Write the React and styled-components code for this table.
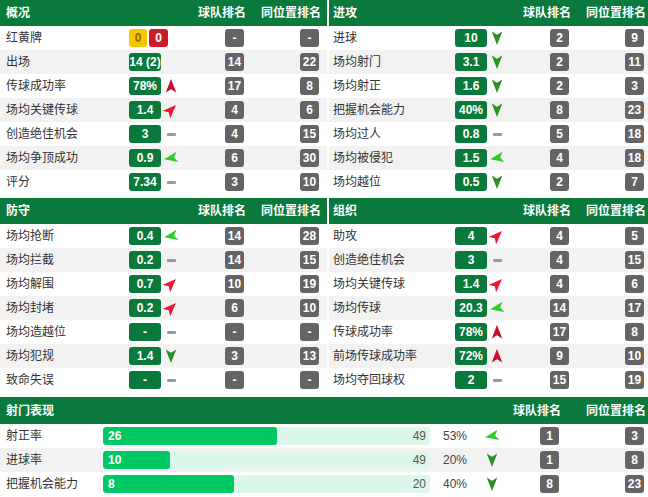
import React from 'react';
import styled, { createGlobalStyle } from 'styled-components';

const Global = createGlobalStyle`
  html, body { margin: 0; padding: 0; background: #fff; }
  body {
    font-family: "Liberation Sans", "Noto Sans CJK SC", sans-serif;
    font-size: 12px;
    color: #333;
    overflow: hidden;
  }
`;

const GREEN = '#0a7a3c';

const Page = styled.div`
  width: 648px;
  display: flex;
  flex-direction: column;
`;

const TwoCol = styled.div`
  display: grid;
  grid-template-columns: 327px 319px;
  column-gap: 2px;
  margin-bottom: ${(p) => p.$mb}px;
`;

const Panel = styled.section`
  display: flex;
  flex-direction: column;
`;

const HeadRow = styled.div`
  display: grid;
  grid-template-columns: ${(p) => p.$label}px 70px 1fr 75px;
  align-items: center;
  height: 26px;
  padding: 0 ${(p) => p.$pr}px 0 ${(p) => p.$pl}px;
  background: ${GREEN};
  color: #fff;
  font-weight: bold;
  line-height: 14px;
`;

const HeadTitle = styled.div`
  grid-column: 1 / 3;
`;

const HeadRight = styled.div`
  display: flex;
  justify-content: flex-end;
  white-space: nowrap;
  margin-right: -2px;
  min-width: 0;
`;

const Row = styled.div`
  display: grid;
  grid-template-columns: ${(p) => p.$label}px 70px 1fr 75px;
  align-items: center;
  height: 24px;
  padding: 0 ${(p) => p.$pr}px 0 ${(p) => p.$pl}px;
  background: ${(p) => (p.$striped ? '#f2f2f2' : '#fff')};
  line-height: 14px;
`;

const Label = styled.div`
  color: #333;
  white-space: nowrap;
`;

const ValueCell = styled.div`
  display: flex;
  align-items: center;
`;

const RankCell = styled.div`
  display: flex;
  justify-content: flex-end;
`;

const Badge = styled.span`
  display: inline-flex;
  align-items: center;
  justify-content: center;
  height: 18px;
  border-radius: 3px;
  font-weight: bold;
  font-size: 12px;
  line-height: 18px;
  white-space: nowrap;
  color: ${(p) => p.$fg || '#fff'};
  background: ${(p) => p.$bg};
  min-width: ${(p) => p.$w}px;
  padding: 0 ${(p) => p.$px || 0}px;
  box-sizing: border-box;
  margin-right: ${(p) => p.$mr || 0}px;
`;

const Dash = styled.span`
  display: inline-block;
  width: 9px;
  height: 3px;
  background: #9a9a9a;
  border-radius: 1px;
  margin-left: 6px;
`;

const ArrowSvg = styled.svg`
  display: block;
  width: 16px;
  height: 16px;
  margin-left: 2px;
`;

const ARROWS = {
  up: { rot: 0, color: '#c4102e' },
  ur: { rot: 45, color: '#e8172f' },
  gl: { rot: 260, color: '#2fcb2a' },
  down: { rot: 180, color: '#2e8f2a' },
};

function Trend({ t }) {
  if (!t) return null;
  if (t === 'dash') return <Dash />;
  const a = ARROWS[t];
  return (
    <ArrowSvg viewBox="-8 -8 16 16">
      <path d="M0 -7 L5.3 6.5 L0 3.2 L-5.3 6.5 Z" fill={a.color} transform={`rotate(${a.rot})`} />
    </ArrowSvg>
  );
}

const Rank = ({ v }) => (
  <Badge $bg="#646464" $w={19} $px={2}>
    {v}
  </Badge>
);

function StatPanel({ title, rows, label, pl, pr }) {
  return (
    <Panel>
      <HeadRow $label={label} $pl={pl} $pr={pr}>
        <HeadTitle>{title}</HeadTitle>
        <HeadRight>球队排名</HeadRight>
        <HeadRight>同位置排名</HeadRight>
      </HeadRow>
      {rows.map((r, i) => (
        <Row key={r[0]} $label={label} $pl={pl} $pr={pr} $striped={i % 2 === 1}>
          <Label>{r[0]}</Label>
          <ValueCell>
            {r[1] === 'cards' ? (
              <>
                <Badge $bg="#f7c600" $fg="#8c6c00" $w={18} $mr={2}>0</Badge>
                <Badge $bg="#cc1c2c" $w={19}>0</Badge>
              </>
            ) : (
              <Badge $bg={GREEN} $w={32}>{r[1]}</Badge>
            )}
            <Trend t={r[2]} />
          </ValueCell>
          <RankCell>
            <Rank v={r[3]} />
          </RankCell>
          <RankCell>
            <Rank v={r[4]} />
          </RankCell>
        </Row>
      ))}
    </Panel>
  );
}

const overview = [
  ['红黄牌', 'cards', null, '-', '-'],
  ['出场', '14 (2)', null, '14', '22'],
  ['传球成功率', '78%', 'up', '17', '8'],
  ['场均关键传球', '1.4', 'ur', '4', '6'],
  ['创造绝佳机会', '3', 'dash', '4', '15'],
  ['场均争顶成功', '0.9', 'gl', '6', '30'],
  ['评分', '7.34', 'dash', '3', '10'],
];

const attack = [
  ['进球', '10', 'down', '2', '9'],
  ['场均射门', '3.1', 'down', '2', '11'],
  ['场均射正', '1.6', 'down', '2', '3'],
  ['把握机会能力', '40%', 'down', '8', '23'],
  ['场均过人', '0.8', 'dash', '5', '18'],
  ['场均被侵犯', '1.5', 'gl', '4', '18'],
  ['场均越位', '0.5', 'down', '2', '7'],
];

const defense = [
  ['场均抢断', '0.4', 'gl', '14', '28'],
  ['场均拦截', '0.2', 'dash', '14', '15'],
  ['场均解围', '0.7', 'ur', '10', '19'],
  ['场均封堵', '0.2', 'ur', '6', '10'],
  ['场均造越位', '-', 'dash', '-', '-'],
  ['场均犯规', '1.4', 'down', '3', '13'],
  ['致命失误', '-', 'dash', '-', '-'],
];

const organize = [
  ['助攻', '4', 'ur', '4', '5'],
  ['创造绝佳机会', '3', 'dash', '4', '15'],
  ['场均关键传球', '1.4', 'ur', '4', '6'],
  ['场均传球', '20.3', 'gl', '14', '17'],
  ['传球成功率', '78%', 'up', '17', '8'],
  ['前场传球成功率', '72%', 'up', '9', '10'],
  ['场均夺回球权', '2', 'dash', '15', '19'],
];

const shooting = [
  ['射正率', 26, 49, '53%', 'gl', '1', '3'],
  ['进球率', 10, 49, '20%', 'down', '1', '8'],
  ['把握机会能力', 8, 20, '40%', 'down', '8', '23'],
];

const SHOT_COLS = '97px 327px 13px 39px 20px 57px 85px';

const ShotHead = styled.div`
  display: grid;
  grid-template-columns: ${SHOT_COLS};
  align-items: center;
  height: 27px;
  padding: 0 4px 0 6px;
  background: ${GREEN};
  color: #fff;
  font-weight: bold;
  line-height: 14px;
`;

const ShotTitle = styled.div`
  grid-column: 1 / 6;
`;

const ShotRow = styled.div`
  display: grid;
  grid-template-columns: ${SHOT_COLS};
  align-items: center;
  height: 24px;
  padding: 0 4px 0 6px;
  background: ${(p) => (p.$striped ? '#f2f2f2' : '#fff')};
  line-height: 14px;
`;

const Track = styled.div`
  display: flex;
  align-items: center;
  height: 18px;
  background: #dcf8eb;
  border-radius: 3px;
  overflow: hidden;
`;

const Bar = styled.div`
  height: 100%;
  display: flex;
  align-items: center;
  padding-left: 5px;
  box-sizing: border-box;
  background: #00c864;
  border-radius: 3px;
  color: #fff;
  font-weight: bold;
  font-size: 12px;
`;

const Total = styled.span`
  margin-left: auto;
  padding-right: 4px;
  color: #555;
  font-size: 12px;
`;

const Pct = styled.div`
  grid-column: 4;
  color: #444;
  font-size: 12px;
`;

const Spacer = styled.div``;

export default function App() {
  return (
    <>
      <Global />
      <Page>
        <TwoCol $mb={4}>
          <StatPanel title="概况" rows={overview} label={123} pl={6} pr={8} />
          <StatPanel title="进攻" rows={attack} label={122} pl={4} pr={4} />
        </TwoCol>
        <TwoCol $mb={5}>
          <StatPanel title="防守" rows={defense} label={123} pl={6} pr={8} />
          <StatPanel title="组织" rows={organize} label={122} pl={4} pr={4} />
        </TwoCol>
        <Panel>
          <ShotHead>
            <ShotTitle>射门表现</ShotTitle>
            <HeadRight>球队排名</HeadRight>
            <HeadRight>同位置排名</HeadRight>
          </ShotHead>
          {shooting.map((s, i) => (
            <ShotRow key={s[0]} $striped={i % 2 === 1}>
              <Label>{s[0]}</Label>
              <Track>
                <Bar style={{ width: `${(s[1] / s[2]) * 100}%` }}>{s[1]}</Bar>
                <Total>{s[2]}</Total>
              </Track>
              <Spacer />
              <Pct>{s[3]}</Pct>
              <ValueCell>
                <Trend t={s[4]} />
              </ValueCell>
              <RankCell>
                <Rank v={s[5]} />
              </RankCell>
              <RankCell>
                <Rank v={s[6]} />
              </RankCell>
            </ShotRow>
          ))}
        </Panel>
      </Page>
    </>
  );
}
